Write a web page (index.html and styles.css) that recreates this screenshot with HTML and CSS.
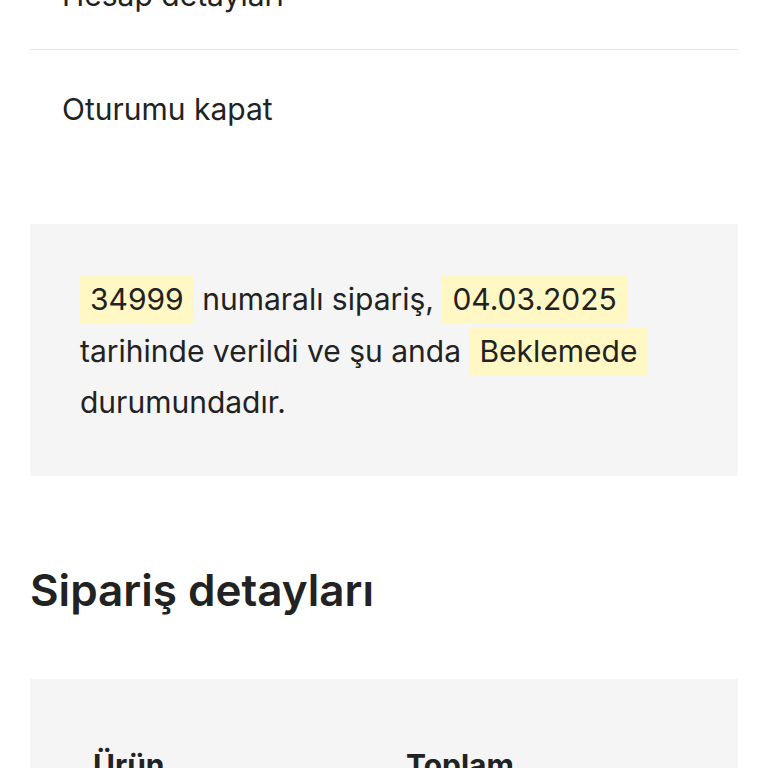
FILE: index.html
```html
<!DOCTYPE html>
<html lang="tr">
<head>
<meta charset="utf-8">
<title>Sipariş</title>
<link rel="stylesheet" href="styles.css">
</head>
<body>
<div class="page">
  <ul class="account-nav">
    <li class="nav-item"><a href="#">Hesap detayları</a></li>
    <li class="nav-item"><a href="#">Oturumu kapat</a></li>
  </ul>

  <div class="order-note">
    <p><mark>34999</mark> numaralı sipariş, <mark>04.03.2025</mark> tarihinde verildi ve şu anda <mark>Beklemede</mark> durumundadır.</p>
  </div>

  <h2 class="section-title">Sipariş detayları</h2>

  <div class="order-table">
    <div class="table-head">
      <span>Ürün</span>
      <span>Toplam</span>
    </div>
  </div>
</div>
</body>
</html>
```

FILE: styles.css
```css
html, body {
  margin: 0;
  padding: 0;
  background: #ffffff;
}
body {
  font-family: Inter, "Noto Sans", "Liberation Sans", sans-serif;
  color: #222222;
  overflow: hidden;
}
.page {
  padding: 0 30px;
}
.account-nav {
  list-style: none;
  margin: -64px 0 0 0;
  padding: 0;
}
.nav-item {
  padding: 41px 32px;
  font-size: 30px;
  line-height: 36px;
}
.nav-item:first-child {
  padding-bottom: 36px;
}
.nav-item + .nav-item {
  border-top: 1px solid #e6e6e6;
}
.nav-item a {
  color: #222222;
  text-decoration: none;
}
.order-note {
  margin-top: 56px;
  background: #f5f5f5;
  padding: 50px 50px 47px 50px;
}
.order-note p {
  margin: 0;
  font-size: 30px;
  line-height: 51.5px;
}
.order-note mark {
  background: #fff7c4;
  color: #222222;
  padding: 6px 10px;
}
.section-title {
  margin: 91px 0 0 0;
  font-size: 44px;
  line-height: 46px;
  font-weight: 600;
  color: #222222;
}
.order-table {
  margin-top: 66px;
  background: #f5f5f5;
  padding: 68px 50px 40px 63px;
}
.table-head {
  display: grid;
  grid-template-columns: 313px 1fr;
  font-size: 30px;
  line-height: 36px;
  font-weight: 700;
}
```
